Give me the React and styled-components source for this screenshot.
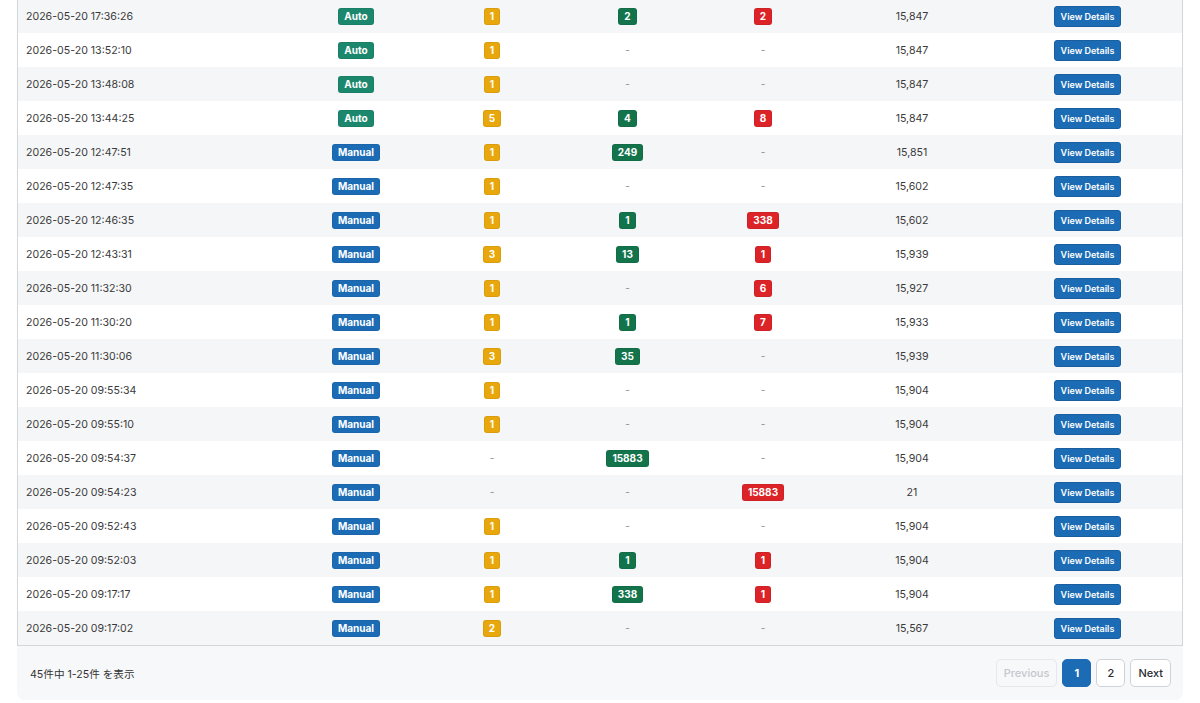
import React from "react";
import styled, { createGlobalStyle } from "styled-components";

const Global = createGlobalStyle`
  html, body { margin: 0; padding: 0; background: #ffffff; }
  body { font-family: Inter, "Noto Sans CJK JP", "Liberation Sans", sans-serif; color: #333; }
`;

const Page = styled.div`
  padding: 0 17px;
  margin-top: -2px;
`;

const Card = styled.div`
  display: flex;
  flex-direction: column;
`;

const TableWrap = styled.div`
  border: 1px solid #d3d6da;
  box-shadow: 0 1px 1px rgba(0, 0, 0, 0.04);
`;

const Table = styled.table`
  width: 100%;
  border-collapse: collapse;
  table-layout: fixed;
`;

const Row = styled.tr`
  background: ${(p) => (p.$striped ? "#f5f6f7" : "#ffffff")};
`;

const Cell = styled.td`
  height: 34px;
  padding: 0 8px;
  vertical-align: middle;
  text-align: ${(p) => p.$align || "center"};
  font-size: 10.6px;
  color: #3a3a3a;
  white-space: nowrap;
`;

const Badge = styled.span`
  display: inline-block;
  padding: 3px 6px;
  font-size: 10px;
  line-height: 11px;
  font-weight: 700;
  color: #fff;
  border-radius: 3px;
  background: ${(p) => p.$bg};
  box-shadow: inset 0 0 0 1px rgba(0, 0, 0, 0.06);
`;

const Dash = styled.span`
  color: #8a8d91;
  font-size: 10px;
`;

const DetailButton = styled.button`
  height: 21px;
  padding: 0 6px;
  font-family: inherit;
  font-size: 9px;
  font-weight: 600;
  color: #fff;
  background: #1c6cb5;
  border: 1px solid #195f9f;
  border-radius: 3px;
  cursor: pointer;
`;

const Footer = styled.div`
  background: #f7f8fa;
  border-radius: 0 0 8px 8px;
  height: 54px;
  padding: 0 12px 0 13px;
  display: flex;
  align-items: center;
  justify-content: space-between;
`;

const Summary = styled.span`
  font-size: 10.6px;
  color: #333;
`;

const Pager = styled.div`
  display: flex;
  gap: 5px;
`;

const PageBtn = styled.button`
  height: 28px;
  min-width: 29px;
  padding: 0 ${(p) => (p.$wide ? "7px" : "0")};
  font-family: inherit;
  font-size: 11px;
  font-weight: ${(p) => (p.$active ? 700 : 500)};
  border-radius: 5px;
  border: 1px solid ${(p) => (p.$active ? "#1c6cb5" : p.$disabled ? "#e6e8eb" : "#cfd3d8")};
  background: ${(p) => (p.$active ? "#1c6cb5" : p.$disabled ? "transparent" : "#ffffff")};
  color: ${(p) => (p.$active ? "#fff" : p.$disabled ? "#c3c7cc" : "#2a2d31")};
`;

const COLORS = {
  auto: "#1b876d",
  manual: "#1c6cb5",
  yellow: "#e8a70c",
  green: "#13744c",
  red: "#dc2328",
};

const rows = [
  ["2026-05-20 17:36:26", "Auto", "1", "2", "2", "15,847"],
  ["2026-05-20 13:52:10", "Auto", "1", null, null, "15,847"],
  ["2026-05-20 13:48:08", "Auto", "1", null, null, "15,847"],
  ["2026-05-20 13:44:25", "Auto", "5", "4", "8", "15,847"],
  ["2026-05-20 12:47:51", "Manual", "1", "249", null, "15,851"],
  ["2026-05-20 12:47:35", "Manual", "1", null, null, "15,602"],
  ["2026-05-20 12:46:35", "Manual", "1", "1", "338", "15,602"],
  ["2026-05-20 12:43:31", "Manual", "3", "13", "1", "15,939"],
  ["2026-05-20 11:32:30", "Manual", "1", null, "6", "15,927"],
  ["2026-05-20 11:30:20", "Manual", "1", "1", "7", "15,933"],
  ["2026-05-20 11:30:06", "Manual", "3", "35", null, "15,939"],
  ["2026-05-20 09:55:34", "Manual", "1", null, null, "15,904"],
  ["2026-05-20 09:55:10", "Manual", "1", null, null, "15,904"],
  ["2026-05-20 09:54:37", "Manual", null, "15883", null, "15,904"],
  ["2026-05-20 09:54:23", "Manual", null, null, "15883", "21"],
  ["2026-05-20 09:52:43", "Manual", "1", null, null, "15,904"],
  ["2026-05-20 09:52:03", "Manual", "1", "1", "1", "15,904"],
  ["2026-05-20 09:17:17", "Manual", "1", "338", "1", "15,904"],
  ["2026-05-20 09:17:02", "Manual", "2", null, null, "15,567"],
];

const Count = ({ value, color }) =>
  value == null ? <Dash>-</Dash> : <Badge $bg={color}>{value}</Badge>;

export default function App() {
  return (
    <>
      <Global />
      <Page>
        <Card>
          <TableWrap>
            <Table>
              <colgroup>
                <col style={{ width: 270 }} />
                <col style={{ width: 136 }} />
                <col style={{ width: 136 }} />
                <col style={{ width: 135 }} />
                <col style={{ width: 136 }} />
                <col style={{ width: 162 }} />
                <col style={{ width: 189 }} />
              </colgroup>
              <tbody>
                {rows.map((r, i) => (
                  <Row key={i} $striped={i % 2 === 0}>
                    <Cell $align="left">{r[0]}</Cell>
                    <Cell>
                      <Badge $bg={r[1] === "Auto" ? COLORS.auto : COLORS.manual}>{r[1]}</Badge>
                    </Cell>
                    <Cell>
                      <Count value={r[2]} color={COLORS.yellow} />
                    </Cell>
                    <Cell>
                      <Count value={r[3]} color={COLORS.green} />
                    </Cell>
                    <Cell>
                      <Count value={r[4]} color={COLORS.red} />
                    </Cell>
                    <Cell>{r[5]}</Cell>
                    <Cell>
                      <DetailButton>View Details</DetailButton>
                    </Cell>
                  </Row>
                ))}
              </tbody>
            </Table>
          </TableWrap>
          <Footer>
            <Summary>45件中 1-25件 を表示</Summary>
            <Pager>
              <PageBtn $wide $disabled>Previous</PageBtn>
              <PageBtn $active>1</PageBtn>
              <PageBtn>2</PageBtn>
              <PageBtn $wide>Next</PageBtn>
            </Pager>
          </Footer>
        </Card>
      </Page>
    </>
  );
}
